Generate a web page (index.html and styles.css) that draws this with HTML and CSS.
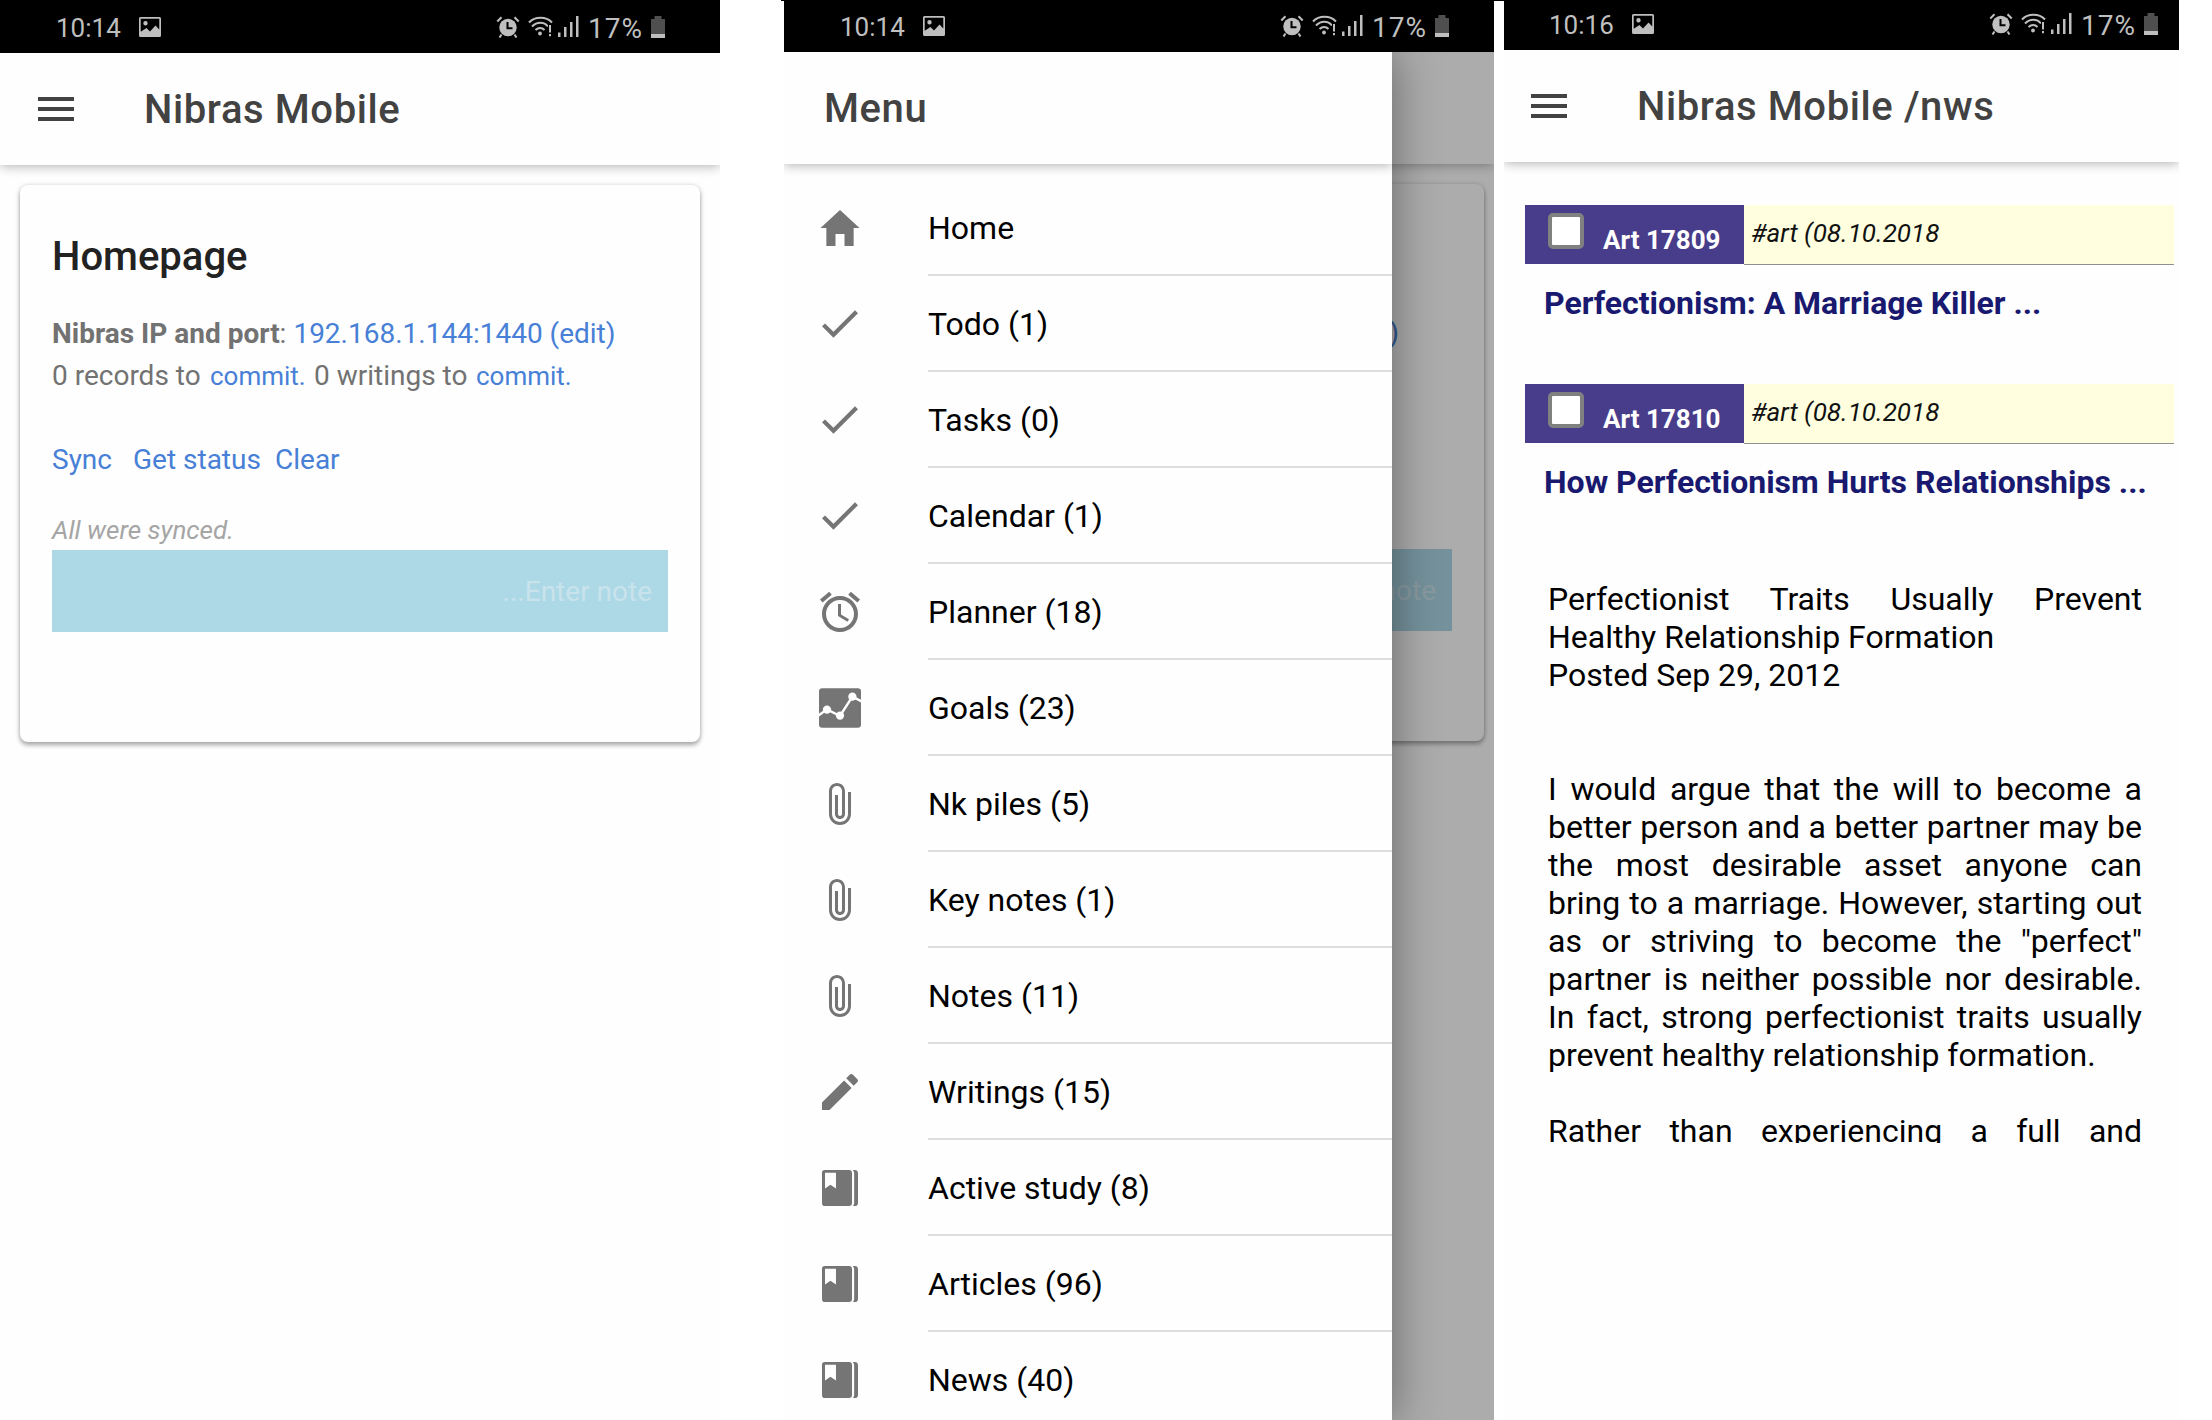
FILE: index.html
```html
<!DOCTYPE html>
<html lang="en">
<head>
<meta charset="utf-8">
<title>Nibras Mobile</title>
<link rel="stylesheet" href="styles.css">
</head>
<body>
<svg class="sprite" width="0" height="0" aria-hidden="true">
  <symbol id="picture" viewBox="0 0 22 20"><path fill-rule="evenodd" d="M1.500 0h19A1.500 1.500 0 0 1 22 1.500v17a1.500 1.500 0 0 1-1.500 1.500h-19A1.500 1.500 0 0 1 0 18.500v-17A1.500 1.500 0 0 1 1.500 0zM1.700 1.700v13L7.500 11l3.500 3.500 5.500-6 3.800 4V1.700zM6.500 4a2.200 2.200 0 1 1 0 4.400 2.200 2.200 0 0 1 0-4.400z"/></symbol>
  <symbol id="clock" viewBox="0 0 24 22"><circle cx="12" cy="11.500" r="8.700"/><path d="M1.300 5.500 5.500 1.300M22.700 5.500 18.500 1.300M5.500 18.500l-2 3M18.500 18.500l2 3" stroke="#bfbfbf" stroke-width="2" fill="none"/><path d="M11.500 6v6.300h5" stroke="#000" stroke-width="2" fill="none"/></symbol>
  <symbol id="wifi" viewBox="0 0 25 21"><g fill="none" stroke="#bfbfbf" stroke-width="2"><path d="M1 6.500C7 .2 18 .2 24 6.500M4 10.500c5-5 12-5 16 0M7.500 14c3-2.800 6.500-2.800 9 0"/></g><circle cx="12" cy="17.500" r="1.900"/><path d="M20 8h4v13h-4z" fill="#000"/><path d="M21 9h2v7.500h-2zM21 18h2v2.300h-2z"/></symbol>
  <symbol id="signal" viewBox="0 0 21 21"><path d="M0 16.500h2.500V21H0zM6 11h2.500v10H6zM12 6h2.500v15H12zM18 0h2.500v21H18z"/></symbol>
  <symbol id="battery" viewBox="0 0 14 22"><path fill="#4f4f4f" d="M3.500 0h7v3H14v15H0V3h3.500z"/><path d="M0 18h14v4H0z"/></symbol>
  <symbol id="home" viewBox="0 0 512 512"><path d="M208 448V320h96v128h97.600V256H464L256 64 48 256h62.400v192z"/></symbol>
  <symbol id="check" viewBox="0 0 512 512"><path d="M186.301 339.893 96 249.461l-32 30.507L186.301 402 448 140.506 416 110z"/></symbol>
  <symbol id="alarm" viewBox="0 0 24 24"><path d="M22 5.720l-4.600-3.860-1.290 1.530 4.600 3.860L22 5.720zM7.880 3.390L6.600 1.860 2 5.710l1.290 1.530 4.590-3.850zM12.500 8H11v6l4.750 2.850.75-1.230-4-2.370V8zM12 4c-4.970 0-9 4.030-9 9s4.020 9 9 9c4.970 0 9-4.030 9-9s-4.030-9-9-9zm0 16c-3.870 0-7-3.130-7-7s3.130-7 7-7 7 3.130 7 7-3.130 7-7 7z"/></symbol>
  <symbol id="chart" viewBox="0 0 512 512"><rect x="32" y="46" width="448" height="420" rx="34"/><path d="M26 336 117 270 256 341 388 135 486 185" fill="none" stroke="#fff" stroke-width="26"/><g fill="#fff"><circle cx="117" cy="273" r="44"/><circle cx="256" cy="337" r="44"/><circle cx="388" cy="135" r="44"/></g></symbol>
  <symbol id="clip" viewBox="0 0 512 512"><path d="M341.334 128v234.666C341.334 409.604 302.938 448 256 448c-46.937 0-85.333-38.396-85.333-85.334V117.334C170.667 87.469 194.135 64 224 64c29.864 0 53.333 23.469 53.333 53.334v245.333c0 11.729-9.605 21.333-21.334 21.333s-21.333-9.604-21.333-21.333V160h-32v202.667C202.667 392.531 226.135 416 256 416c29.865 0 53.334-23.469 53.334-53.333V117.334C309.334 70.401 270.938 32 224 32c-46.938 0-85.334 38.401-85.334 85.334v245.332C138.667 427.729 190.938 480 256 480c65.062 0 117.334-52.271 117.334-117.334V128h-32z"/></symbol>
  <symbol id="pencil" viewBox="0 0 512 512"><path d="M64 368v80h80l235.727-235.729-79.999-79.998L64 368zm377.602-217.602c8.531-8.531 8.531-21.334 0-29.865l-50.135-50.135c-8.531-8.531-21.334-8.531-29.865 0l-39.468 39.469 79.999 79.998 39.469-39.467z"/></symbol>
  <symbol id="book" viewBox="0 0 512 512"><path fill-rule="evenodd" d="M94 64h258a32 32 0 0 1 32 32v320a32 32 0 0 1-32 32H94a30 30 0 0 1-30-30V94a30 30 0 0 1 30-30zM96 94v166l58-38 59 38V94z"/><path d="M390 64h22a36 36 0 0 1 36 36v312a36 36 0 0 1-36 36h-22c12-8 17-20 17-36V100c0-16-5-28-17-36z"/></symbol>
</svg>

<div class="screens">
  <section class="phone">
    <div class="status">
      <span class="time">10:14</span><svg class="s-picture"><use href="#picture"/></svg>
      <svg class="s-clock"><use href="#clock"/></svg><svg class="s-wifi"><use href="#wifi"/></svg><svg class="s-signal"><use href="#signal"/></svg><span class="percent">17%</span><svg class="s-battery"><use href="#battery"/></svg>
    </div>
    <header class="toolbar"><div class="burger"><i></i><i></i><i></i></div><h1>Nibras Mobile</h1></header>
    <article class="card">
      <h2>Homepage</h2>
      <p class="line"><b>Nibras IP and port</b>: <a class="address">192.168.1.144:1440 (edit)</a></p>
      <p class="line"><span class="count">0 records to</span><a class="commit">commit.</a><span class="count">0 writings to</span><a class="commit">commit.</a></p>
      <p class="line actions"><a>Sync</a><a>Get status</a><a>Clear</a></p>
      <p class="synced">All were synced.</p>
      <div class="note">...Enter note</div>
    </article>
  </section>

  <section class="phone menu-phone">
    <div class="status">
      <span class="time">10:14</span><svg class="s-picture"><use href="#picture"/></svg>
      <svg class="s-clock"><use href="#clock"/></svg><svg class="s-wifi"><use href="#wifi"/></svg><svg class="s-signal"><use href="#signal"/></svg><span class="percent">17%</span><svg class="s-battery"><use href="#battery"/></svg>
    </div>
    <header class="toolbar"></header>
    <article class="card">
      <h2></h2>
      <p class="line covered"><a>(edit)</a></p>
      <p class="line"></p>
      <p class="line actions"></p>
      <p class="synced"></p>
      <div class="note">...Enter note</div>
    </article>
    <div class="backdrop"></div>
    <nav class="drawer">
      <header class="toolbar"><h1>Menu</h1></header>
      <ul>
        <li><svg><use href="#home"/></svg><span>Home</span></li>
        <li><svg><use href="#check"/></svg><span>Todo (1)</span></li>
        <li><svg><use href="#check"/></svg><span>Tasks (0)</span></li>
        <li><svg><use href="#check"/></svg><span>Calendar (1)</span></li>
        <li><svg><use href="#alarm"/></svg><span>Planner (18)</span></li>
        <li><svg><use href="#chart"/></svg><span>Goals (23)</span></li>
        <li><svg><use href="#clip"/></svg><span>Nk piles (5)</span></li>
        <li><svg><use href="#clip"/></svg><span>Key notes (1)</span></li>
        <li><svg><use href="#clip"/></svg><span>Notes (11)</span></li>
        <li><svg><use href="#pencil"/></svg><span>Writings (15)</span></li>
        <li><svg><use href="#book"/></svg><span>Active study (8)</span></li>
        <li><svg><use href="#book"/></svg><span>Articles (96)</span></li>
        <li><svg><use href="#book"/></svg><span>News (40)</span></li>
      </ul>
    </nav>
  </section>

  <section class="phone news-phone">
    <div class="status">
      <span class="time">10:16</span><svg class="s-picture"><use href="#picture"/></svg>
      <svg class="s-clock"><use href="#clock"/></svg><svg class="s-wifi"><use href="#wifi"/></svg><svg class="s-signal"><use href="#signal"/></svg><span class="percent">17%</span><svg class="s-battery"><use href="#battery"/></svg>
    </div>
    <header class="toolbar"><div class="burger"><i></i><i></i><i></i></div><h1>Nibras Mobile /nws</h1></header>
    <main class="news">
      <div class="entry">
        <div class="bar"><div class="badge"><span class="box"></span><b>Art 17809</b></div><em>#art (08.10.2018</em></div>
        <h3>Perfectionism: A Marriage Killer ...</h3>
      </div>
      <div class="entry">
        <div class="bar"><div class="badge"><span class="box"></span><b>Art 17810</b></div><em>#art (08.10.2018</em></div>
        <h3>How Perfectionism Hurts Relationships ...</h3>
      </div>
      <div class="text">
        <p>Perfectionist Traits Usually Prevent Healthy Relationship Formation<br>Posted Sep 29, 2012</p>
        <p class="spaced">I would argue that the will to become a better person and a better partner may be the most desirable asset anyone can bring to a marriage. However, starting out as or striving to become the "perfect" partner is neither possible nor desirable. In fact, strong perfectionist traits usually prevent healthy relationship formation.</p>
        <p class="last">Rather than experiencing a full and</p>
      </div>
    </main>
  </section>
</div>
<div class="edge edge-a"></div><div class="edge edge-b"></div>
</body>
</html>
```
FILE: styles.css
```css
* { box-sizing: border-box; }
body { margin: 0; background: #fff; font-family: Roboto, "Liberation Sans", sans-serif; overflow: hidden; }
h1, h2, h3, p, ul { margin: 0; padding: 0; }
.sprite { position: absolute; }
.screens { display: flex; width: 2212px; height: 1420px; overflow: hidden; }
.phone { position: relative; flex: none; width: 720px; height: 1423px; overflow: hidden; background: #fefefe; }
.menu-phone { width: 710px; margin: -1px 10px 0 64px; }
.news-phone { width: 675px; margin-top: -3px; }

.status { display: flex; align-items: center; height: 53px; padding-left: 56px; background: #000; color: #bfbfbf; fill: #bfbfbf; font-size: 26px; line-height: 53px; }
.news-phone .status { padding-left: 45px; }
.status svg { flex: none; display: block; }
.time { width: 83px; padding-top: 3px; }
.s-picture { width: 22px; height: 20px; }
.s-clock { width: 24px; height: 22px; margin-left: 335px; }
.s-wifi { width: 25px; height: 21px; margin-left: 8px; }
.s-signal { width: 21px; height: 21px; margin-left: 5px; }
.percent { width: 62px; margin-left: 9px; padding-top: 3px; font-size: 28px; letter-spacing: 1px; }
.s-battery { width: 14px; height: 22px; margin-left: 1px; }

.toolbar { position: relative; display: flex; align-items: center; height: 112px; padding-left: 38px; background: #fefefe; box-shadow: 0 1px 11px rgba(0,0,0,.32); clip-path: inset(0 0 -12px 0); }
.news-phone .toolbar { padding-left: 27px; }
.burger { display: grid; gap: 6px; width: 36px; margin-right: 70px; }
.burger i { height: 4px; background: #424242; }
h1 { padding-top: 2px; font-size: 40px; font-weight: 500; line-height: 112px; letter-spacing: .6px; color: #424242; white-space: nowrap; }

.card { width: 680px; height: 557px; margin: 20px 0 0 20px; padding: 47px 32px 0; border-radius: 8px; background: #fefefe; box-shadow: 0 4px 4px rgba(0,0,0,.18), 0 1px 5px rgba(0,0,0,.28); }
h2 { height: 50px; margin-bottom: 31px; font-size: 40px; font-weight: 500; line-height: 50px; color: #222; }
.line { height: 42px; font-size: 28px; line-height: 42px; color: #727272; white-space: nowrap; display: flex; }
.line b { font-weight: 700; }
a { color: #4780d6; }
.address { margin-left: 7px; }
.covered { justify-content: flex-end; padding-right: 53px; }
.count { width: 158px; }
.commit { width: 104px; font-size: 26px; line-height: 43px; }
.count + .commit + .count { width: 162px; }
.actions { margin: 42px 0 30px; }
.actions a:nth-child(1) { width: 81px; }
.actions a:nth-child(2) { width: 142px; }
.synced { height: 39px; font-size: 26px; font-style: italic; line-height: 38px; color: #a5a5a5; }
.note { width: 616px; height: 82px; padding-right: 16px; background: #add8e6; color: #c9e3ec; font-size: 28px; line-height: 83px; text-align: right; }

.backdrop { position: absolute; inset: 53px 0 0; background: rgba(0,0,0,.32); }
.drawer { position: absolute; left: 0; top: 53px; bottom: 0; width: 608px; background: #fefefe; box-shadow: 0 0 44px rgba(0,0,0,.42); clip-path: inset(0 -102px 0 0); }
ul { list-style: none; padding-top: 16px; }
li { display: flex; align-items: center; height: 96px; padding-left: 32px; }
li svg { width: 48px; height: 48px; margin-right: 64px; fill: #757575; }
li span { flex: 1; height: 96px; border-bottom: 2px solid #dedede; font-size: 32px; line-height: 97px; color: #000; white-space: nowrap; }
.drawer .toolbar { padding-left: 40px; }

.news { padding: 43px 0 0 21px; }
.entry { height: 179px; }
.bar { display: flex; width: 649px; height: 60px; }
.badge { display: flex; width: 219px; height: 59px; padding: 8px 0 0 23px; background: #483d8b; color: #fff; font-size: 26px; line-height: 55px; white-space: nowrap; }
.box { width: 36px; height: 36px; margin-right: 19px; border: 4px solid #808080; border-radius: 5px; background: #fff; }
.bar em { flex: 1; padding-left: 7px; border-bottom: 1px solid #909090; background: #ffffdf; font-size: 26px; line-height: 56px; color: #111; }
h3 { margin-left: 19px; font-size: 32px; font-weight: 700; line-height: 76px; color: #191970; white-space: nowrap; }
.text { width: 594px; height: 563px; margin: 17px 0 0 23px; overflow: hidden; font-size: 32px; line-height: 38px; text-align: justify; color: #000; }
.spaced { margin: 76px 0 38px; }
.last { text-align-last: justify; }

.edge { position: absolute; top: 0; height: 1px; background: #000; }
.edge-a { left: 781px; width: 661px; }
.edge-b { left: 1452px; width: 675px; }
```
